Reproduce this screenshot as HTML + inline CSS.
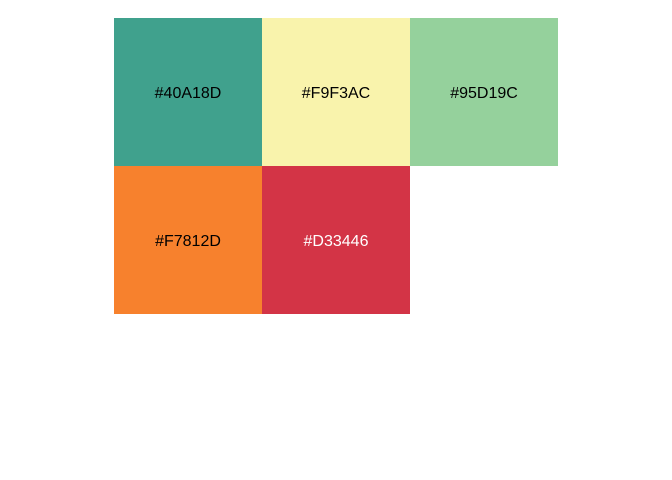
<!DOCTYPE html>
<html><head><style>
body{margin:0;width:672px;height:480px;background:#fff;position:relative;font-family:"Liberation Sans",sans-serif;font-size:16px}
div{position:absolute;width:148px;height:148px;box-sizing:border-box;padding-top:4px;display:flex;align-items:center;justify-content:center;color:#000}
</style></head><body>
<div style="left:114px;top:18px;background:#40A18D">#40A18D</div>
<div style="left:262px;top:18px;background:#F9F3AC">#F9F3AC</div>
<div style="left:410px;top:18px;background:#95D19C">#95D19C</div>
<div style="left:114px;top:166px;background:#F7812D">#F7812D</div>
<div style="left:262px;top:166px;background:#D33446;color:#fff">#D33446</div>
</body></html>
